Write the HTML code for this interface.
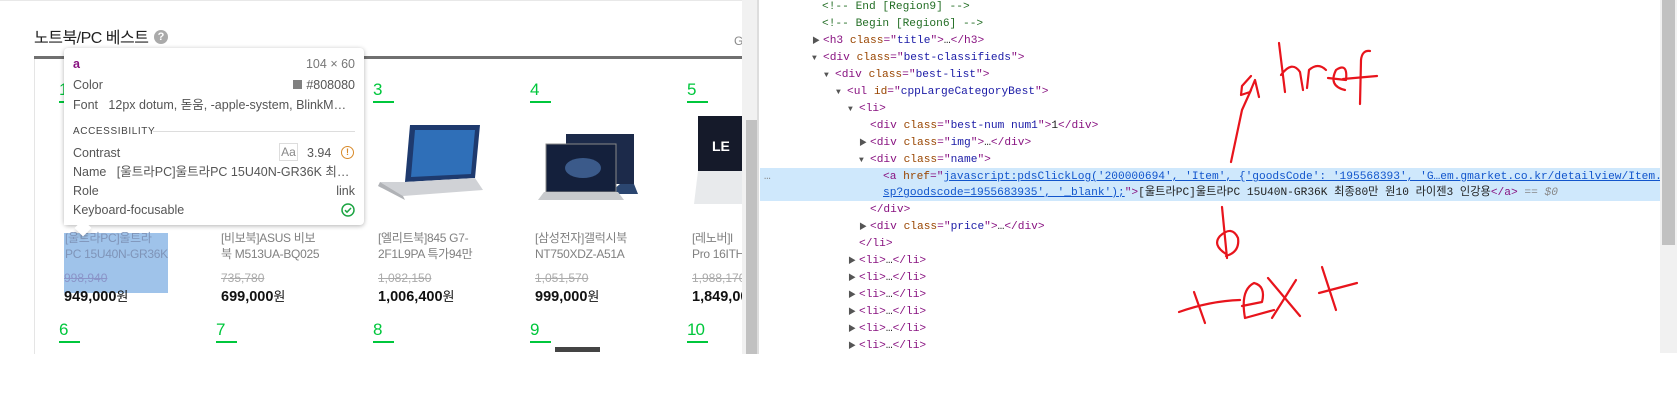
<!DOCTYPE html>
<html><head><meta charset="utf-8"><style>
*{margin:0;padding:0;box-sizing:border-box}
body{width:1677px;height:406px;background:#fff;position:relative;overflow:hidden;font-family:"Liberation Sans","Noto Sans CJK KR",sans-serif;line-height:1.2}
.a{position:absolute;white-space:nowrap}
.num{position:absolute;color:#00c73c;font-size:17px;line-height:17px;border-bottom:2px solid #00c73c;width:21px;padding-bottom:3px;font-family:"Liberation Sans",sans-serif}
.nm{position:absolute;font-size:12px;line-height:16px;color:#808080;width:110px;letter-spacing:-0.3px}
.op{position:absolute;font-size:12px;line-height:14px;color:#aaa;text-decoration:line-through}
.pr{position:absolute;font-size:14.5px;line-height:17px;font-weight:bold;color:#111}
.pr span{font-weight:normal;font-size:13px}
.dt{position:absolute;font-family:"Liberation Mono","Noto Sans CJK KR",monospace;font-size:11.2px;line-height:17px;white-space:nowrap;color:#222}
.t{color:#881280}.at{color:#994500}.v{color:#1a1aa6}.c{color:#236e25}.g{color:#888}
.tri{color:#555;font-size:8px;display:inline-block;width:11px}
.tr{position:absolute;font-size:12.5px;line-height:16px;color:#555;white-space:nowrap}
</style></head><body>
<div class="a" style="left:0;top:0;width:742px;height:1px;background:#e8e8e8"></div>
<div class="a" style="left:34px;top:29px;font-size:16px;line-height:19px;color:#222;letter-spacing:-0.5px">노트북/PC 베스트</div>
<div class="a" style="left:154px;top:30px;width:14px;height:14px;border-radius:50%;background:#aaa;color:#fff;font-size:11px;font-weight:bold;text-align:center;line-height:14px">?</div>
<div class="a" style="left:734px;top:34px;font-size:12px;color:#888">G</div>
<div class="a" style="left:34px;top:56px;width:708px;height:3px;background:#707070"></div>
<div class="a" style="left:34px;top:59px;width:1px;height:295px;background:#e5e5e5"></div>

<div class="num" style="left:59px;top:81px">1</div>
<div class="num" style="left:216px;top:81px">2</div>
<div class="num" style="left:373px;top:81px">3</div>
<div class="num" style="left:530px;top:81px">4</div>
<div class="num" style="left:687px;top:81px">5</div>
<div class="num" style="left:59px;top:321px">6</div>
<div class="num" style="left:216px;top:321px">7</div>
<div class="num" style="left:373px;top:321px">8</div>
<div class="num" style="left:530px;top:321px">9</div>
<div class="num" style="left:687px;top:321px;width:21px;letter-spacing:-1px">10</div>

<svg class="a" style="left:375px;top:120px" width="115" height="80" viewBox="0 0 115 80">
<polygon points="35,5 105,5 100,58 30,62" fill="#1e3a6e"/><polygon points="40,10 100,10 96,54 36,57" fill="#2f6fb8"/>
<polygon points="30,62 100,58 108,70 28,76 5,62" fill="#d0d2d6"/><polygon points="5,62 28,76 30,80 3,66" fill="#b0b2b6"/></svg>
<svg class="a" style="left:538px;top:130px" width="110" height="72" viewBox="0 0 110 72">
<rect x="28" y="4" width="68" height="50" fill="#1c2a4a"/><polygon points="82,54 96,54 100,64 70,64" fill="#2b4670"/>
<rect x="8" y="14" width="70" height="48" fill="#14203c" stroke="#888" stroke-width="1"/><ellipse cx="45" cy="38" rx="18" ry="10" fill="#3b5a8a"/>
<polygon points="6,62 80,62 86,70 0,70" fill="#c8cacd"/></svg>
<svg class="a" style="left:694px;top:116px" width="48" height="92" viewBox="0 0 48 92">
<rect x="4" y="0" width="44" height="55" fill="#151a2a"/><text x="18" y="35" fill="#fff" font-size="14" font-weight="bold" font-family="Liberation Sans">LE</text>
<polygon points="4,55 48,55 48,88 0,88" fill="#e8eaec"/></svg>
<div class="a" style="left:555px;top:347px;width:45px;height:5px;background:#444"></div>

<div class="a" style="left:64px;top:233px;width:104px;height:60px;background:#9fc3ea"></div>
<div class="nm" style="left:65px;top:230px;color:#7f94b8">[울트라PC]울트라<br>PC 15U40N-GR36K</div>
<div class="nm" style="left:221px;top:230px">[비보북]ASUS 비보<br>북 M513UA-BQ025</div>
<div class="nm" style="left:378px;top:230px">[엘리트북]845 G7-<br>2F1L9PA 특가94만</div>
<div class="nm" style="left:535px;top:230px">[삼성전자]갤럭시북<br>NT750XDZ-A51A</div>
<div class="nm" style="left:692px;top:230px">[레노버]l<br>Pro 16ITH</div>
<div class="op" style="left:64px;top:271px;color:#8a94c8">998,940</div>
<div class="op" style="left:221px;top:271px">735,780</div>
<div class="op" style="left:378px;top:271px">1,082,150</div>
<div class="op" style="left:535px;top:271px">1,051,570</div>
<div class="op" style="left:692px;top:271px">1,988,170</div>
<div class="pr" style="left:64px;top:288px">949,000<span>원</span></div>
<div class="pr" style="left:221px;top:288px">699,000<span>원</span></div>
<div class="pr" style="left:378px;top:288px">1,006,400<span>원</span></div>
<div class="pr" style="left:535px;top:288px">999,000<span>원</span></div>
<div class="pr" style="left:692px;top:288px">1,849,000<span>원</span></div>
<div class="a" style="left:742px;top:0;width:935px;height:406px;background:#fff"></div>
<div class="a" style="left:0;top:354px;width:742px;height:52px;background:#fff"></div>
<div class="a" style="left:742px;top:0;width:15px;height:354px;background:#f1f1f1"></div>
<div class="a" style="left:746px;top:120px;width:11px;height:234px;background:#c1c1c1"></div>
<div class="a" style="left:757px;top:0;width:2px;height:354px;background:#ddd"></div>

<div class="a" style="left:64px;top:48px;width:300px;height:177px;background:#fff;border-radius:4px;box-shadow:0 1px 5px rgba(0,0,0,.3)"></div>
<div class="a" style="left:77px;top:222px;width:12px;height:12px;background:#fff;transform:rotate(45deg);box-shadow:2px 2px 3px rgba(0,0,0,.15)"></div>
<div class="a" style="left:64px;top:216px;width:40px;height:9px;background:#fff"></div>
<div class="tr" style="left:73px;top:56px;color:#881280;font-weight:bold">a</div>
<div class="tr" style="right:1322px;top:56px;color:#777">104 × 60</div>
<div class="tr" style="left:73px;top:77px">Color</div>
<div class="a" style="left:293px;top:80px;width:9px;height:9px;background:#808080"></div>
<div class="tr" style="right:1322px;top:77px">#808080</div>
<div class="tr" style="left:73px;top:97px">Font&nbsp;&nbsp;&nbsp;12px dotum, 돋움, -apple-system, BlinkM…</div>
<div class="tr" style="left:73px;top:124px;font-size:10px;letter-spacing:.6px;color:#444">ACCESSIBILITY</div>
<div class="a" style="left:153px;top:131px;width:202px;height:1px;background:#ddd"></div>
<div class="tr" style="left:73px;top:145px">Contrast</div>
<div class="a" style="left:279px;top:143px;width:19px;height:18px;border:1px solid #ddd;font-size:12px;color:#888;text-align:center;line-height:16px">Aa</div>
<div class="tr" style="left:307px;top:145px">3.94</div>
<div class="a" style="left:341px;top:146px;width:13px;height:13px;border:1.5px solid #d88a2a;border-radius:50%;color:#d88a2a;font-size:9px;font-weight:bold;text-align:center;line-height:10px">!</div>
<div class="tr" style="left:73px;top:164px">Name&nbsp;&nbsp;&nbsp;[울트라PC]울트라PC 15U40N-GR36K 최…</div>
<div class="tr" style="left:73px;top:183px">Role</div>
<div class="tr" style="right:1322px;top:183px">link</div>
<div class="tr" style="left:73px;top:202px">Keyboard-focusable</div>
<svg class="a" style="left:341px;top:203px" width="14" height="14" viewBox="0 0 14 14"><circle cx="7" cy="7" r="6" fill="none" stroke="#1da543" stroke-width="1.5"/><path d="M4 7.2l2 2 4-4.2" fill="none" stroke="#1da543" stroke-width="1.5"/></svg>

<div class="a" style="left:760px;top:168px;width:900px;height:33px;background:#cfe8fc"></div>
<div class="dt" style="left:822px;top:-1px"><span class="c">&lt;!-- End [Region9] --&gt;</span></div>
<div class="dt" style="left:822px;top:16px"><span class="c">&lt;!-- Begin [Region6] --&gt;</span></div>
<div class="dt" style="left:812px;top:33px"><span class="tri">▶</span><span class="t">&lt;h3 </span><span class="at">class</span><span class="t">="</span><span class="v">title</span><span class="t">"&gt;</span>…<span class="t">&lt;/h3&gt;</span></div>
<div class="dt" style="left:812px;top:50px"><span class="tri">▼</span><span class="t">&lt;div </span><span class="at">class</span><span class="t">="</span><span class="v">best-classifieds</span><span class="t">"&gt;</span></div>
<div class="dt" style="left:824px;top:67px"><span class="tri">▼</span><span class="t">&lt;div </span><span class="at">class</span><span class="t">="</span><span class="v">best-list</span><span class="t">"&gt;</span></div>
<div class="dt" style="left:836px;top:84px"><span class="tri">▼</span><span class="t">&lt;ul </span><span class="at">id</span><span class="t">="</span><span class="v">cppLargeCategoryBest</span><span class="t">"&gt;</span></div>
<div class="dt" style="left:848px;top:101px"><span class="tri">▼</span><span class="t">&lt;li&gt;</span></div>
<div class="dt" style="left:870px;top:118px"><span class="t">&lt;div </span><span class="at">class</span><span class="t">="</span><span class="v">best-num num1</span><span class="t">"&gt;</span>1<span class="t">&lt;/div&gt;</span></div>
<div class="dt" style="left:859px;top:135px"><span class="tri">▶</span><span class="t">&lt;div </span><span class="at">class</span><span class="t">="</span><span class="v">img</span><span class="t">"&gt;</span>…<span class="t">&lt;/div&gt;</span></div>
<div class="dt" style="left:859px;top:152px"><span class="tri">▼</span><span class="t">&lt;div </span><span class="at">class</span><span class="t">="</span><span class="v">name</span><span class="t">"&gt;</span></div>
<div class="dt g" style="left:764px;top:169px">…</div>
<div class="dt" style="left:883px;top:169px"><span class="t">&lt;a </span><span class="at">href</span><span class="t">="</span><span class="v" style="color:#1155cc;text-decoration:underline">javascript:pdsClickLog('200000694', 'Item', {'goodsCode': '195568393', 'G…em.gmarket.co.kr/detailview/Item.a</span></div>
<div class="dt" style="left:883px;top:185px"><span style="color:#1155cc;text-decoration:underline">sp?goodscode=1955683935', '_blank');</span><span class="t">"&gt;</span>[울트라PC]울트라PC 15U40N-GR36K 최종80만 원10 라이젠3 인강용<span class="t">&lt;/a&gt;</span> <span class="g">== <i>$0</i></span></div>
<div class="dt" style="left:870px;top:202px"><span class="t">&lt;/div&gt;</span></div>
<div class="dt" style="left:859px;top:219px"><span class="tri">▶</span><span class="t">&lt;div </span><span class="at">class</span><span class="t">="</span><span class="v">price</span><span class="t">"&gt;</span>…<span class="t">&lt;/div&gt;</span></div>
<div class="dt" style="left:859px;top:236px"><span class="t">&lt;/li&gt;</span></div>
<div class="dt" style="left:848px;top:253px"><span class="tri">▶</span><span class="t">&lt;li&gt;</span>…<span class="t">&lt;/li&gt;</span></div>
<div class="dt" style="left:848px;top:270px"><span class="tri">▶</span><span class="t">&lt;li&gt;</span>…<span class="t">&lt;/li&gt;</span></div>
<div class="dt" style="left:848px;top:287px"><span class="tri">▶</span><span class="t">&lt;li&gt;</span>…<span class="t">&lt;/li&gt;</span></div>
<div class="dt" style="left:848px;top:304px"><span class="tri">▶</span><span class="t">&lt;li&gt;</span>…<span class="t">&lt;/li&gt;</span></div>
<div class="dt" style="left:848px;top:321px"><span class="tri">▶</span><span class="t">&lt;li&gt;</span>…<span class="t">&lt;/li&gt;</span></div>
<div class="dt" style="left:848px;top:338px;height:16px;overflow:hidden"><span class="tri">▶</span><span class="t">&lt;li&gt;</span>…<span class="t">&lt;/li&gt;</span></div>
<div class="a" style="left:1660px;top:0;width:17px;height:353px;background:#f1f1f1"></div>
<div class="a" style="left:1662px;top:0;width:13px;height:245px;background:#c1c1c1"></div>

<svg class="a" style="left:0;top:0" width="1677" height="406" viewBox="0 0 1677 406" fill="none" stroke="#e8141c" stroke-width="2.2" stroke-linecap="round" stroke-linejoin="round">
<path d="M1231 162 L1242 110 L1251 90"/>
<path d="M1251 76 L1242 86 L1241 95 L1250 92 L1255 80 L1259 97"/>
<path d="M1279 43 L1285 92"/>
<path d="M1281 75 Q1292 60 1300 72 L1303 90"/>
<path d="M1307 88 L1309 70 Q1318 62 1326 70"/>
<path d="M1328 78 L1346 80 Q1348 62 1336 70 Q1328 86 1345 90"/>
<path d="M1360 104 L1361 60 Q1362 50 1370 51"/>
<path d="M1343 79 L1377 76"/>
<path d="M1222 207 L1227 258"/>
<path d="M1226 254 Q1212 245 1220 236 Q1232 225 1238 238 Q1240 252 1226 256"/>
<path d="M1179 312 Q1210 301 1240 300"/>
<path d="M1194 292 L1205 323"/>
<path d="M1242 306 L1262 302 Q1266 286 1254 283 Q1240 290 1245 318 L1274 310"/>
<path d="M1268 278 L1300 316"/>
<path d="M1296 280 L1272 318"/>
<path d="M1322 267 L1336 310"/>
<path d="M1319 293 L1357 283"/>
</svg>
</body></html>
